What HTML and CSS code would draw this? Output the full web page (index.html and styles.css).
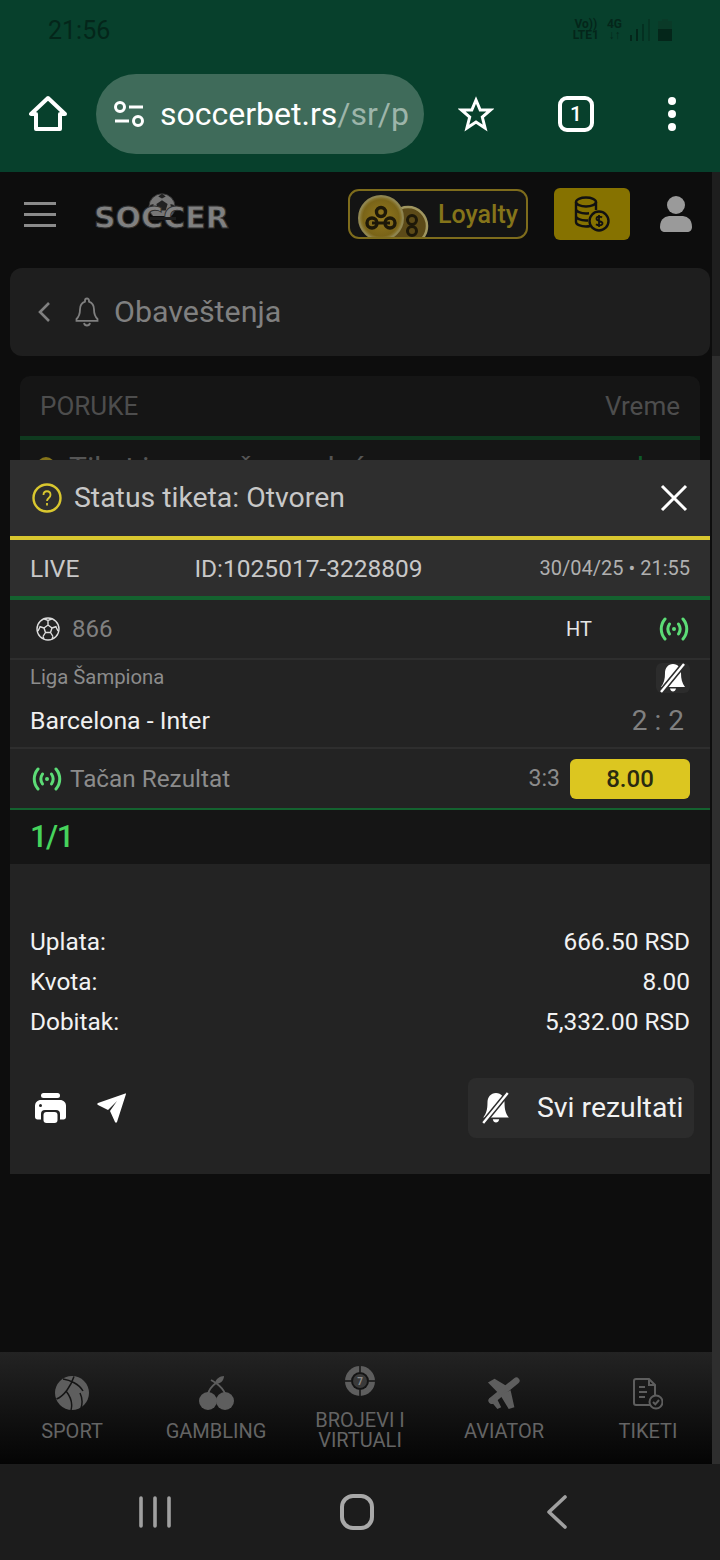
FILE: index.html
```html
<!DOCTYPE html>
<html lang="en">
  <head>
    <meta charset="UTF-8" />
    <meta name="viewport" content="width=device-width, initial-scale=1.0" />
    <title>Obaveštenja</title>
    <link rel="stylesheet" href="styles.css">
  </head>
  <body>
    <div class="browser">
      <div class="status-bar">
        <span class="clock">21:56</span>
        <div class="status-icons">
          <span class="net-label">Vo))<br />LTE1</span>
          <span class="net-label">4G<br />↓↑</span>
          <svg width="20" height="22" viewBox="0 0 20 22" fill="#04261a">
            <rect x="0" y="16" width="2" height="6" />
            <rect x="6" y="10" width="2" height="12" />
            <rect x="12" y="5" width="2" height="17" opacity="0.6" />
            <rect x="18" y="0" width="2" height="22" opacity="0.4" />
          </svg>
          <svg width="14" height="22" viewBox="0 0 14 22">
            <path d="M4 0h6v2h4v20H0V2h4z" fill="#0a3a28" />
            <rect y="10" width="14" height="12" fill="#04261a" />
          </svg>
        </div>
      </div>
      <div class="toolbar">
        <svg class="home-icon" width="38" height="38" viewBox="0 0 38 38" fill="none" stroke="#fff" stroke-width="4" stroke-linejoin="round">
          <path d="M19 3 2 19h5v15h24V19h5z" />
        </svg>
        <div class="url-pill">
          <svg width="32" height="26" viewBox="0 0 32 26" fill="none" stroke="#fff" stroke-width="3">
            <circle cx="7" cy="6" r="4.5" />
            <path d="M16 6h14M2 20h14" />
            <circle cx="25" cy="20" r="4.5" />
          </svg>
          <div class="url-text">soccerbet.rs<span class="url-path">/sr/p</span></div>
        </div>
        <svg class="star-icon" width="36" height="36" viewBox="0 0 36 36" fill="none" stroke="#fff" stroke-width="3" stroke-linejoin="miter">
          <path d="m18 4 4.2 10h10.3l-8.2 7 2.8 11L18 26l-9.1 6 2.8-11-8.2-7h10.3z" />
        </svg>
        <div class="tab-count">1</div>
        <div class="menu-dots"><i></i><i></i><i></i></div>
      </div>
    </div>

    <div class="page">
      <header class="site-header">
        <div class="burger"><i></i><i></i><i></i></div>
        <div class="logo">
          <svg class="logo-ball" width="28" height="24" viewBox="0 0 30 24">
            <circle cx="15" cy="15" r="14" fill="#777" stroke="#333" stroke-width="1" />
            <path d="m15 8 6 4-2 7h-8l-2-7zM15 1l-4 3 4 2 4-2zM2 13l3 5 1-6zM28 13l-3 5-1-6z" fill="#222" />
          </svg>
          <span class="logo-text">SOCCER</span>
          <i class="logo-bar"></i>
        </div>
        <div class="loyalty">
          <svg class="coins" width="72" height="46" viewBox="0 0 72 46">
            <defs>
              <radialGradient id="coinGold" cx="50%" cy="50%" r="55%">
                <stop offset="0" stop-color="#94791f" />
                <stop offset="0.75" stop-color="#7a6418" />
                <stop offset="1" stop-color="#a09660" />
              </radialGradient>
            </defs>
            <circle cx="50" cy="35" r="19" fill="#5c4a18" stroke="#a09660" stroke-width="2.5" />
            <circle cx="23" cy="27" r="22" fill="url(#coinGold)" stroke="#8f8550" stroke-width="2" />
            <circle cx="23" cy="21" r="4.5" fill="none" stroke="#1d1808" stroke-width="3.4" />
            <circle cx="14" cy="32" r="5" fill="none" stroke="#1d1808" stroke-width="3.4" />
            <circle cx="32" cy="32" r="5" fill="none" stroke="#1d1808" stroke-width="3.4" />
            <path d="M14 32h18" stroke="#1d1808" stroke-width="3" />
            <circle cx="54" cy="29" r="4.5" fill="none" stroke="#1d1808" stroke-width="3" />
            <circle cx="54" cy="40" r="4.5" fill="none" stroke="#1d1808" stroke-width="3" />
          </svg>
          <span class="loyalty-label">Loyalty</span>
        </div>
        <div class="wallet">
          <svg width="36" height="36" viewBox="0 0 36 36" fill="none" stroke="#111" stroke-width="2.4">
            <ellipse cx="12" cy="6" rx="10" ry="4.5" />
            <path d="M2 6v20c0 2.500 4.500 4.500 10 4.500 1.500 0 3-.2 4-.5M22 6v8M2 13c0 2.500 4.500 4.500 10 4.500 1 0 2-.1 3-.2M2 20c0 2.500 4.500 4.500 10 4.500h2" />
            <circle cx="25" cy="25" r="9.500" />
            <path d="M28 21.500c-1-1-5.500-1.500-5.500 1.300 0 3 6 1.500 6 4.500 0 2.800-5 2.200-6.500 1M25 19v12" stroke-width="1.800" />
          </svg>
        </div>
        <svg class="user-icon" width="32" height="36" viewBox="0 0 32 36" fill="#9a9a9a">
          <circle cx="16" cy="9" r="9" />
          <path d="M0 31c0-9 6-11 11-11h10c5 0 11 2 11 11 0 3-2 5-5 5H5c-3 0-5-2-5-5z" />
        </svg>
      </header>

      <div class="title-card">
        <svg width="14" height="22" viewBox="0 0 14 22" fill="none" stroke="#808080" stroke-width="2.6">
          <path d="M12 2 3 11l9 9" />
        </svg>
        <svg class="title-bell" width="26" height="30" viewBox="0 0 26 30" fill="none" stroke="#808080" stroke-width="1.800">
          <path d="M13 1.500c-1.200 0-2 .9-2 2v1.200C7.500 6 6 9 6 12.500c0 5-1.500 7.500-3.500 9.500v1.800h21V22c-2-2-3.500-4.500-3.500-9.500 0-3.500-1.500-6.500-5-7.800V3.500c0-1.100-.8-2-2-2zM10 26c.4 1.600 1.500 2.500 3 2.500s2.600-.9 3-2.500" />
        </svg>
        <span class="title-text">Obaveštenja</span>
      </div>

      <div class="messages">
        <div class="messages-head">
          <span>PORUKE</span>
          <span>Vreme</span>
        </div>
        <div class="message-row">
          <i class="message-dot"></i>
          <span class="message-text">Tiket je uspešno uplaćen</span>
          <span class="message-time">l</span>
        </div>
      </div>

      <nav class="bottom-nav">
        <div class="nav-item">
          <svg width="34" height="34" viewBox="0 0 34 34" fill="#5e5e5e">
            <circle cx="17" cy="17" r="17" />
            <g fill="none" stroke="#141414" stroke-width="1.500">
              <path d="M8 3c7 1 16 5 20 12M1.500 23C9 20 16 10 19 .5M16 34c2-7-1-14-5-19M26 32c2-6 1-11-1-15" />
            </g>
          </svg>
          <span class="nav-label">SPORT</span>
        </div>
        <div class="nav-item">
          <svg width="35" height="34" viewBox="0 0 35 34" fill="#5e5e5e">
            <circle cx="9" cy="25" r="9" />
            <circle cx="26" cy="25" r="9" />
            <path d="M9 18c1-4 4-8 8-11 4 3 8 7 9 11" fill="none" stroke="#5e5e5e" stroke-width="1.800" />
            <path d="M16 8c0-5 5-8 9-8 0 5-4 8-9 8z" />
            <path d="m17 7-5-3" stroke="#5e5e5e" stroke-width="1.600" />
          </svg>
          <span class="nav-label">GAMBLING</span>
        </div>
        <div class="nav-item nav-item-wrap">
          <svg width="30" height="30" viewBox="0 0 30 30">
            <circle cx="15" cy="15" r="15" fill="#5e5e5e" />
            <circle cx="15" cy="15" r="9" fill="#141414" />
            <circle cx="15" cy="15" r="7" fill="#3a3a3a" />
            <path d="M15 0v6M15 24v6M0 15h6M24 15h6" stroke="#141414" stroke-width="1.500" />
            <text class="chip-seven" x="15" y="18.500" text-anchor="middle">7</text>
          </svg>
          <span class="nav-label">BROJEVI I VIRTUALI</span>
        </div>
        <div class="nav-item">
          <svg width="36" height="34" viewBox="0 0 36 36" fill="#5e5e5e">
            <path d="M31 5 5 26" stroke="#5e5e5e" stroke-width="7" stroke-linecap="round" />
            <path d="M1 7 8 3 23 12 14 20zM25 15l4 18-6 2-9-15zM2 24l7-3 6 12-4 2z" />
          </svg>
          <span class="nav-label">AVIATOR</span>
        </div>
        <div class="nav-item">
          <svg width="30" height="32" viewBox="0 0 30 32" fill="none" stroke="#5e5e5e" stroke-width="2">
            <path d="M17 27H3a2 2 0 0 1-2-2V3a2 2 0 0 1 2-2h13l6 6v10" />
            <path d="M16 1v6h6M6 9h6M6 14h8M6 19h6" />
            <circle cx="23" cy="24" r="6.500" />
            <path d="m20 24 2.300 2.300L26 22" />
          </svg>
          <span class="nav-label">TIKETI</span>
        </div>
      </nav>

      <div class="scroll-strip"></div>

      <section class="ticket">
        <div class="ticket-head">
          <svg width="30" height="30" viewBox="0 0 30 30" fill="none" stroke="#d9c72f" stroke-width="2.400">
            <circle cx="15" cy="15" r="13.500" />
            <path d="M11.500 12c0-5 7-5 7 0 0 3-3.500 3-3.500 6M15 20v2.500" stroke-width="1.800" />
          </svg>
          <span class="ticket-status">Status tiketa: Otvoren</span>
          <svg class="close-icon" width="28" height="28" viewBox="0 0 28 28" stroke="#fff" stroke-width="3">
            <path d="m2 2 24 24M26 2 2 26" />
          </svg>
        </div>
        <div class="ticket-info">
          <span class="info-live">LIVE</span>
          <span class="info-id">ID:1025017-3228809</span>
          <span class="info-date">30/04/25 • 21:55</span>
        </div>
        <div class="match-top">
          <svg width="24" height="24" viewBox="0 0 24 24" fill="none" stroke="#ddd" stroke-width="1.400">
            <circle cx="12" cy="12" r="11" />
            <path d="m12 8 4 3-1.500 4.500h-5L8 11zM12 8V3.500M16 11l4.500-1.500M14.500 15.500l2.500 4M9.500 15.500l-2.500 4M8 11 3.500 9.500M8 1.800l4 1.700 4-1.700M2 14l2-4M22 14l-2-4M7 19.500l1 2.500M17 19.500l-1 2.500" />
          </svg>
          <span class="match-code">866</span>
          <span class="match-period">HT</span>
          <svg class="live-icon" width="30" height="24" viewBox="0 0 30 24" fill="none" stroke="#5cdc76" stroke-width="3" stroke-linecap="round">
            <path d="M6 2c-5 6-5 14 0 20M24 2c5 6 5 14 0 20M10.500 7c-2 3-2 7 0 10M19.500 7c2 3 2 7 0 10" />
            <circle cx="15" cy="12" r="2" fill="#5cdc76" stroke="none" />
          </svg>
        </div>
        <div class="match-main">
          <div class="match-league-row">
            <span class="match-league">Liga Šampiona</span>
            <span class="mute-box">
              <svg width="28" height="30" viewBox="0 0 28 30" fill="#fff">
                <path d="M14 1C9 1 6 5 6 10c0 6-1 10-4 14h24c-3-4-4-8-4-14 0-5-3-9-8-9zM11 25.500c.4 2 1.500 3 3 3s2.600-1 3-3z" />
                <path d="M25 1 2 29" stroke="#2c2c2c" stroke-width="5.500" />
                <path d="M25 1 2 29" stroke="#fff" stroke-width="2.400" />
              </svg>
            </span>
          </div>
          <div class="match-teams-row">
            <span class="match-teams">Barcelona - Inter</span>
            <span class="match-score">2 : 2</span>
          </div>
        </div>
        <div class="match-bet">
          <svg width="30" height="24" viewBox="0 0 30 24" fill="none" stroke="#5cdc76" stroke-width="3" stroke-linecap="round">
            <path d="M6 2c-5 6-5 14 0 20M24 2c5 6 5 14 0 20M10.500 7c-2 3-2 7 0 10M19.500 7c2 3 2 7 0 10" />
            <circle cx="15" cy="12" r="2" fill="#5cdc76" stroke="none" />
          </svg>
          <span class="bet-market">Tačan Rezultat</span>
          <span class="bet-pick">3:3</span>
          <span class="bet-odd">8.00</span>
        </div>
        <div class="ticket-count">1/1</div>
        <div class="ticket-sum">
          <div class="sum-row"><span>Uplata:</span><span>666.50 RSD</span></div>
          <div class="sum-row"><span>Kvota:</span><span>8.00</span></div>
          <div class="sum-row"><span>Dobitak:</span><span>5,332.00 RSD</span></div>
        </div>
        <div class="ticket-foot">
          <svg class="print-icon" width="31" height="30" viewBox="0 0 31 30" fill="#fff">
            <rect x="6" y="0" width="19" height="5" rx="2.500" />
            <path d="M6 7h19c3.500 0 6 2.500 6 6v11c0 1.500-1 2.500-2.500 2.500H2.500C1 26.500 0 25.500 0 24V13c0-3.500 2.500-6 6-6z" />
            <rect x="6" y="17" width="19" height="13" rx="4" fill="#232323" />
            <rect x="8.500" y="19" width="14" height="11" rx="3" />
            <circle cx="5.500" cy="12.500" r="1.500" fill="#232323" />
          </svg>
          <svg width="30" height="30" viewBox="0 0 30 30" fill="#fff">
            <path d="M29 .3 1 10c-1 .5-1 1.500 0 2l10 5 9-9-7 10 5 11c.5 1 1.500 1 2 0l9-28c.2-.5-.3-.9-1-.7z" />
          </svg>
          <div class="results-btn">
            <svg width="30" height="32" viewBox="0 0 28 30" fill="#fff">
              <path d="M14 1C9 1 6 5 6 10c0 6-1 10-4 14h24c-3-4-4-8-4-14 0-5-3-9-8-9zM11 25.500c.4 2 1.500 3 3 3s2.600-1 3-3z" />
              <path d="M25 1 2 29" stroke="#2c2c2c" stroke-width="5" />
              <path d="M25 1 2 29" stroke="#fff" stroke-width="2.200" />
            </svg>
            <span class="results-label">Svi rezultati</span>
          </div>
        </div>
      </section>
    </div>

    <div class="system-nav">
      <svg width="32" height="32" viewBox="0 0 32 32" stroke="#a0a0a0" stroke-width="3.600" stroke-linecap="round">
        <path d="M2 2v28M16 2v28M30 2v28" />
      </svg>
      <svg class="system-home" width="36" height="36" viewBox="0 0 36 36" fill="none" stroke="#a8a8a8" stroke-width="4">
        <rect x="3" y="2" width="30" height="32" rx="11" />
      </svg>
      <svg width="20" height="34" viewBox="0 0 20 34" fill="none" stroke="#a0a0a0" stroke-width="3.600" stroke-linecap="round" stroke-linejoin="round">
        <path d="M18 2 2 17l16 15" />
      </svg>
    </div>
  </body>
</html>
```

FILE: styles.css
```css
* {
  box-sizing: border-box;
}
body {
  display: flex;
  flex-direction: column;
  width: 720px;
  height: 1560px;
  margin: 0;
  overflow: hidden;
  background-color: #0d0d0d;
  font-family: Roboto, "Noto Sans", sans-serif;
}
svg {
  display: block;
  flex: none;
}

/* Browser chrome */
.browser {
  height: 172px;
  flex: none;
  background-color: #07402c;
}
.status-bar {
  display: flex;
  justify-content: space-between;
  align-items: center;
  height: 60px;
  padding: 0 48px;
}
.clock {
  font-size: 25px;
  color: #04261a;
}
.status-icons {
  display: flex;
  align-items: center;
  gap: 8px;
}
.net-label {
  font-size: 12px;
  line-height: 11px;
  font-weight: 700;
  text-align: center;
  color: #04261a;
}
.toolbar {
  display: flex;
  align-items: center;
  height: 108px;
  padding: 0 0 0 29px;
}
.url-pill {
  display: flex;
  align-items: center;
  width: 328px;
  height: 80px;
  margin-left: 29px;
  padding-left: 17px;
  gap: 15px;
  border-radius: 40px;
  background-color: #3f6b5a;
}
.url-text {
  white-space: nowrap;
  font-size: 32px;
  color: #fff;
}
.url-path {
  color: #9db5aa;
}
.star-icon {
  margin-left: 34px;
}
.tab-count {
  width: 36px;
  height: 36px;
  margin-left: 64px;
  border: 4px solid #fff;
  border-radius: 9px;
  font-size: 21px;
  font-weight: 500;
  line-height: 28px;
  text-align: center;
  color: #fff;
}
.menu-dots {
  display: flex;
  flex-direction: column;
  gap: 5px;
  margin-left: 74px;
}
.menu-dots i {
  width: 8px;
  height: 8px;
  border-radius: 50%;
  background-color: #fff;
}

/* Site page */
.page {
  position: relative;
  display: flex;
  flex-direction: column;
  flex: 1;
  overflow: hidden;
}
.site-header {
  display: flex;
  align-items: center;
  flex: none;
  height: 96px;
  padding: 0 0 12px 24px;
}
.burger {
  display: flex;
  flex-direction: column;
  gap: 8px;
  width: 32px;
}
.burger i {
  height: 3px;
  background-color: #8a8a8a;
}
.logo {
  position: relative;
  width: 134px;
  height: 44px;
  margin-left: 38px;
  padding-top: 11px;
}
.logo-ball {
  position: absolute;
  top: 0;
  left: 54px;
}
.logo-text {
  position: relative;
  display: block;
  font-family: "DejaVu Sans", sans-serif;
  font-size: 30px;
  font-weight: 700;
  line-height: 30px;
  letter-spacing: 0;
  color: #808080;
  -webkit-text-stroke: 1px #2f2f2f;
}
.logo-bar {
  position: absolute;
  top: 25px;
  left: 56px;
  width: 26px;
  height: 3px;
  background-color: #1c1c1c;
}
.loyalty {
  display: flex;
  align-items: flex-end;
  gap: 8px;
  flex: none;
  width: 180px;
  height: 50px;
  margin-left: 120px;
  padding-left: 8px;
  overflow: hidden;
  border: 2px solid #7e6c1c;
  border-radius: 11px;
  background-color: #141414;
}
.loyalty-label {
  align-self: center;
  font-size: 25px;
  font-weight: 500;
  color: #85741a;
}
.wallet {
  display: flex;
  justify-content: center;
  align-items: center;
  width: 76px;
  height: 52px;
  margin-left: 26px;
  border-radius: 6px;
  background-color: #867200;
}
.user-icon {
  margin-left: 30px;
}
.title-card {
  display: flex;
  align-items: center;
  flex: none;
  height: 88px;
  margin: 0 10px;
  padding-left: 27px;
  border-radius: 12px;
  background-color: #1e1e1e;
}
.title-bell {
  margin-left: 23px;
}
.title-text {
  margin-left: 14px;
  margin-top: -2px;
  font-size: 30.4px;
  color: #808080;
}
.messages {
  margin: 20px 20px 0;
  border-radius: 10px 10px 0 0;
  background-color: #151515;
}
.messages-head {
  display: flex;
  justify-content: space-between;
  align-items: center;
  height: 64px;
  padding: 0 20px;
  border-bottom: 4px solid #0f3a1f;
  font-size: 26px;
  color: #4d4d4d;
}
.message-row {
  display: flex;
  align-items: flex-start;
  gap: 14px;
  padding: 10px 20px 0;
  font-size: 30px;
  line-height: 35px;
  color: #555;
}
.message-dot {
  width: 18px;
  height: 18px;
  margin: 7px 0 0 -3px;
  border-radius: 50%;
  background-color: #85741a;
}
.message-time {
  margin-left: auto;
  margin-right: 36px;
  color: #0f5a2a;
}

/* Bottom navigation */
.bottom-nav {
  display: grid;
  grid-template-columns: repeat(5, 1fr);
  flex: none;
  height: 112px;
  margin-top: auto;
  background: linear-gradient(#232323, #040404);
}
.nav-item {
  display: flex;
  flex-direction: column;
  align-items: center;
  justify-content: flex-end;
  gap: 11px;
  padding-bottom: 23px;
}
.nav-item-wrap {
  gap: 14px;
  padding-bottom: 14px;
}
.nav-label {
  width: 120px;
  font-size: 20px;
  line-height: 20px;
  text-align: center;
  color: #646464;
}
.chip-seven {
  font-family: Roboto, sans-serif;
  font-size: 10px;
  font-weight: 700;
  fill: #8a8a8a;
}
.scroll-strip {
  position: absolute;
  top: 0;
  right: 0;
  bottom: 0;
  width: 8px;
  background: linear-gradient(#1e1e1e 184px, #2e2e2e 184px);
}

/* Ticket dialog */
.ticket {
  position: absolute;
  top: 288px;
  left: 10px;
  width: 700px;
  height: 714px;
  background-color: #232323;
}
.ticket-head {
  display: flex;
  align-items: center;
  height: 80px;
  padding: 0 22px;
  border-bottom: 4px solid #d9c72f;
  background-color: #2e2e2e;
}
.ticket-status {
  margin-left: 12px;
  margin-top: -2px;
  font-size: 28.4px;
  color: #c8c8c8;
}
.close-icon {
  margin-left: auto;
}
.ticket-info {
  display: flex;
  align-items: center;
  justify-content: space-between;
  height: 60px;
  padding: 0 20px;
  border-bottom: 4px solid #14622f;
  background-color: #2e2e2e;
  font-size: 24.5px;
  color: #c8c8c8;
}
.info-id {
  margin-right: 2px;
}
.info-date {
  font-size: 20px;
  color: #b0b0b0;
}
.match-top {
  display: flex;
  align-items: center;
  height: 60px;
  padding: 0 21px 0 26px;
  border-bottom: 2px solid #2e2e2e;
}
.match-code {
  margin-left: 12px;
  font-size: 24px;
  color: #808080;
}
.match-period {
  margin-left: auto;
  margin-right: 67px;
  font-size: 20px;
  color: #e6e6e6;
}
.match-main {
  height: 89px;
  padding: 3px 20px 0;
  border-bottom: 2px solid #2e2e2e;
}
.match-league-row,
.match-teams-row,
.sum-row {
  display: flex;
  justify-content: space-between;
  align-items: center;
}
.match-league {
  margin-top: -2px;
  font-size: 20.3px;
  color: #8c8c8c;
}
.mute-box {
  display: flex;
  justify-content: center;
  align-items: center;
  width: 34px;
  height: 30px;
  border-radius: 6px;
  background-color: #2c2c2c;
}
.match-teams-row {
  margin-top: 11px;
}
.match-teams {
  font-size: 24.8px;
  color: #f0f0f0;
}
.match-score {
  margin-right: 6px;
  font-size: 28px;
  color: #808080;
}
.match-bet {
  display: flex;
  align-items: center;
  height: 61px;
  padding: 0 20px 0 22px;
  border-bottom: 2px solid #14622f;
}
.bet-market {
  margin-left: 8px;
  font-size: 24.3px;
  color: #8c8c8c;
}
.bet-pick {
  margin-left: auto;
  font-size: 23px;
  color: #8c8c8c;
}
.bet-odd {
  width: 120px;
  height: 40px;
  margin-left: 10px;
  border-radius: 6px;
  background-color: #dcc620;
  font-size: 24px;
  font-weight: 500;
  line-height: 40px;
  text-align: center;
  color: #2a2a10;
}
.ticket-count {
  height: 54px;
  padding-left: 20px;
  background-color: #151515;
  font-size: 31px;
  font-weight: 500;
  letter-spacing: -1.5px;
  line-height: 54px;
  color: #46d35c;
}
.ticket-sum {
  display: flex;
  flex-direction: column;
  padding: 57px 20px 0;
  font-size: 24.4px;
  color: #f2f2f2;
}
.sum-row {
  height: 40px;
}
.ticket-foot {
  display: flex;
  align-items: center;
  gap: 31px;
  padding: 37px 16px 0 25px;
}
.results-btn {
  display: flex;
  align-items: center;
  gap: 26px;
  width: 226px;
  height: 60px;
  margin-left: auto;
  padding-left: 13px;
  border-radius: 8px;
  background-color: #2c2c2c;
  font-size: 28.4px;
  white-space: nowrap;
  color: #f2f2f2;
}
.results-label {
  margin-top: -2px;
}

/* Phone navigation keys */
.system-nav {
  display: flex;
  justify-content: space-between;
  align-items: center;
  flex: none;
  height: 96px;
  padding: 0 153px 0 139px;
  background-color: #1c1c1c;
}
.system-home {
  margin-right: 4px;
}
```
